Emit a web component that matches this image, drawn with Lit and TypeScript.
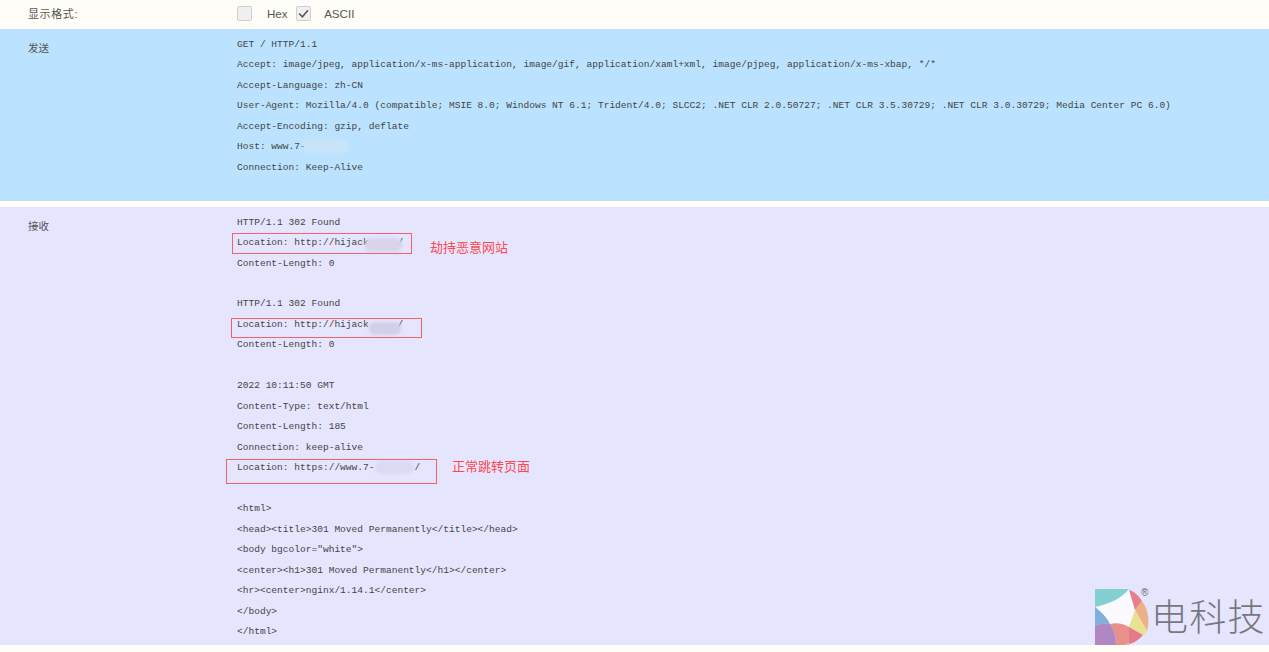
import { LitElement, html, css, svg } from "lit";
import { customElement } from "lit/decorators.js";

const send = [
  "GET / HTTP/1.1",
  "Accept: image/jpeg, application/x-ms-application, image/gif, application/xaml+xml, image/pjpeg, application/x-ms-xbap, */*",
  "Accept-Language: zh-CN",
  "User-Agent: Mozilla/4.0 (compatible; MSIE 8.0; Windows NT 6.1; Trident/4.0; SLCC2; .NET CLR 2.0.50727; .NET CLR 3.5.30729; .NET CLR 3.0.30729; Media Center PC 6.0)",
  "Accept-Encoding: gzip, deflate",
  "Host: www.7-",
  "Connection: Keep-Alive",
];
const recv = [
  "HTTP/1.1 302 Found",
  "Location: http://hijack     /",
  "Content-Length: 0",
  "",
  "HTTP/1.1 302 Found",
  "Location: http://hijack     /",
  "Content-Length: 0",
  "",
  "2022 10:11:50 GMT",
  "Content-Type: text/html",
  "Content-Length: 185",
  "Connection: keep-alive",
  "Location: https://www.7-       /",
  "",
  "<html>",
  "<head><title>301 Moved Permanently</title></head>",
  '<body bgcolor="white">',
  "<center><h1>301 Moved Permanently</h1></center>",
  "<hr><center>nginx/1.14.1</center>",
  "</body>",
  "</html>",
];
const boxes = [
  [232, 233, 180, 21],
  [231, 318, 191, 20],
  [226, 459, 211, 25],
];
const blurs = [
  [303, 139, 45, 14, "#c8e4f8"],
  [365, 238, 37, 14, "#d8d4ec"],
  [369, 322, 32, 13, "#d2d0e8"],
  [375, 461, 39, 13, "#dcdaf2"],
];
const notes = [
  [430, 248, "劫持恶意网站"],
  [452, 467, "正常跳转页面"],
];

@customElement("app-root")
export class AppRoot extends LitElement {
  static styles = css`
    :host {
      display: block;
      position: relative;
      height: 652px;
      overflow: hidden;
      background: #fffdf8;
      font-family: "Liberation Sans", "Noto Sans CJK SC", sans-serif;
      color: #555;
    }
    .row {
      display: grid;
      grid-template-columns: 209px 1fr;
      padding-left: 28px;
      font-size: 11px;
    }
    .format {
      height: 29px;
      box-sizing: border-box;
      padding-bottom: 3px;
      align-items: center;
      background: #fffdf8;
    }
    .format-label { letter-spacing: 0.6px; }
    .options {
      display: flex;
      align-items: center;
      font-size: 11.6px;
      color: #555;
    }
    .check {
      width: 15px;
      height: 15px;
      box-sizing: border-box;
      border: 1px solid #cfcfcf;
      border-radius: 2px;
      background: #f0f0f0;
      display: flex;
      align-items: center;
      justify-content: center;
    }
    .hex { margin: 0 8.5px 0 15px; }
    .ascii { margin-left: 13px; }
    .send {
      height: 172px;
      background: #bbe3ff;
      box-sizing: border-box;
      padding-top: 5.5px;
    }
    .gap { height: 6px; background: #fffef9; }
    .recv {
      height: 438px;
      background: #e6e5fe;
      box-sizing: border-box;
      padding-top: 5.6px;
    }
    .label { line-height: 20.5px; color: #555; font-size: 10.5px; padding-top: 3.5px; }
    .text {
      font-family: "Liberation Mono", "Noto Sans CJK SC", monospace;
      font-size: 9.56px;
      line-height: 20.5px;
      color: #444;
      white-space: pre;
    }
    .line { height: 20.5px; }
    .recv .line { height: 20.47px; line-height: 20.47px; }
    .box {
      position: absolute;
      box-sizing: border-box;
      border: 1px solid #f2636b;
    }
    .blur {
      position: absolute;
      border-radius: 6px;
      filter: blur(1.5px);
    }
    .note {
      position: absolute;
      font-size: 13px;
      line-height: 16px;
      color: #fb4b50;
      transform: translateY(-50%);
    }
    .logo {
      position: absolute;
      left: 1095px;
      top: 589px;
      height: 57px;
      display: flex;
      align-items: flex-start;
    }
    .brand {
      font-family: "Noto Sans CJK SC", sans-serif;
      font-weight: 300;
      font-size: 37px;
      line-height: 40px;
      letter-spacing: 1.2px;
      color: #77777f;
      margin: 6px 0 0 1px;
    }
    .reg {
      position: absolute;
      left: 46px;
      top: -2px;
      font-size: 10px;
      color: #666;
    }
  `;

  private logo() {
    return html`<svg width="55" height="57" viewBox="0 0 55 57">
      ${svg`
        <path d="M0 18L34 0L40 21L34 38L15 35Z" fill="#fbfaff"/>
        <path d="M0 0H34C26 10 14 15 0 18Z" fill="#83cfd2"/>
        <path d="M34 1C40 3 44 7 47 12L40 21Z" fill="#e7808c"/>
        <path d="M47 12C53 20 55 32 52 42L40 21Z" fill="#edb088"/>
        <path d="M40 21L52 42L48 46L34 38Z" fill="#e8e292"/>
        <path d="M34 38L48 46C43 52 37 55 30 56H34Z" fill="#e57a8a"/>
        <path d="M15 35C22 33 29 35 34 38V54L30 56H21C21 48 19 41 15 35Z" fill="#e7918a"/>
        <path d="M0 18C7 23 12 29 15 35C10 34 4 35 0 37Z" fill="#7fb0da"/>
        <path d="M0 37C4 35 10 34 15 35C19 41 21 48 21 56H0Z" fill="#ae87c3"/>
      `}
    </svg>`;
  }

  render() {
    return html`
      <div class="row format">
        <div class="format-label">显示格式:</div>
        <div class="options">
          <span class="check"></span><span class="hex">Hex</span>
          <span class="check">
            <svg width="11" height="11" viewBox="0 0 10 10"><path d="M1 5l3 3 5-6" fill="none" stroke="#555" stroke-width="1.4"/></svg>
          </span><span class="ascii">ASCII</span>
        </div>
      </div>
      <div class="row send">
        <div class="label">发送</div>
        <div class="text">${send.map((l) => html`<div class="line">${l}</div>`)}</div>
      </div>
      <div class="gap"></div>
      <div class="row recv">
        <div class="label">接收</div>
        <div class="text">${recv.map((l) => html`<div class="line">${l}</div>`)}</div>
      </div>
      ${blurs.map(
        ([x, y, w, h, c]) =>
          html`<div class="blur" style="left:${x}px;top:${y}px;width:${w}px;height:${h}px;background:${c}"></div>`
      )}
      ${boxes.map(
        ([x, y, w, h]) =>
          html`<div class="box" style="left:${x}px;top:${y}px;width:${w}px;height:${h}px"></div>`
      )}
      ${notes.map(
        ([x, y, t]) => html`<div class="note" style="left:${x}px;top:${y}px">${t}</div>`
      )}
      <div class="logo">${this.logo()}<span class="reg">®</span><span class="brand">电科技</span></div>
    `;
  }
}
